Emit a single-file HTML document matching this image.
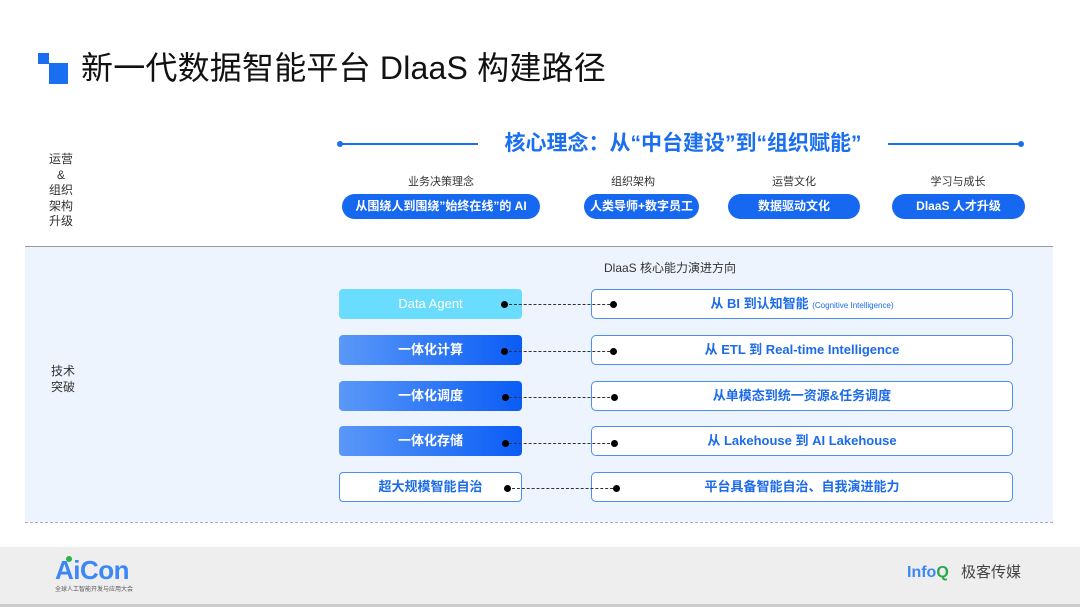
<!DOCTYPE html><html><head><meta charset="utf-8"><style>
*{margin:0;padding:0;box-sizing:border-box}
body{width:1080px;height:607px;position:relative;background:#fff;font-family:"Liberation Sans","Noto Sans CJK SC",sans-serif;overflow:hidden}
.a{position:absolute}
.c{text-align:center}
.pill{position:absolute;height:25px;border-radius:13px;background:#1768f0;color:#fff;font-size:12px;font-weight:bold;line-height:25px;text-align:center}
.lab{position:absolute;font-size:11px;color:#333;text-align:center;width:140px}
.lb{position:absolute;left:339px;width:183px;height:30px;border-radius:4px;color:#fff;font-size:13px;font-weight:bold;line-height:30px;text-align:center;background:linear-gradient(90deg,#5a98f8,#0a5cf5)}
.rb{position:absolute;left:591px;width:422px;height:30px;border-radius:5px;border:1.5px solid #4d8ef5;background:#fff;color:#1d6be8;font-size:13px;font-weight:bold;line-height:27px;text-align:center}
.dot{position:absolute;width:7px;height:7px;border-radius:50%;background:#000}
.dash{position:absolute;left:509px;width:106px;border-top:1.5px dashed #333}
</style></head><body>
<div class="a" style="left:38px;top:53px;width:11px;height:11px;background:#1a6ff0"></div>
<div class="a" style="left:49px;top:63px;width:19px;height:21px;background:#1a6ff0"></div>
<div class="a" style="left:81px;top:48px;font-size:32px;color:#111;line-height:40px;letter-spacing:0.2px">新一代数据智能平台 DlaaS 构建路径</div>

<div class="a" style="left:340px;top:143px;width:138px;height:2px;background:#1a6ff0"></div>
<div class="a" style="left:337px;top:141px;width:6px;height:6px;border-radius:50%;background:#1a6ff0"></div>
<div class="a" style="left:888px;top:143px;width:134px;height:2px;background:#1a6ff0"></div>
<div class="a" style="left:1018px;top:141px;width:6px;height:6px;border-radius:50%;background:#1a6ff0"></div>
<div class="a c" style="left:478px;top:130px;width:410px;font-size:21px;font-weight:bold;color:#1a6ff0;line-height:28px">核心理念：从“中台建设”到“组织赋能”</div>

<div class="a c" style="left:30px;top:152px;width:62px;font-size:12px;color:#333;line-height:15.5px">运营<br>&amp;<br>组织<br>架构<br>升级</div>

<div class="lab" style="left:371px;top:173px">业务决策理念</div>
<div class="lab" style="left:563px;top:173px">组织架构</div>
<div class="lab" style="left:724px;top:173px">运营文化</div>
<div class="lab" style="left:888px;top:173px">学习与成长</div>
<div class="pill" style="left:342px;top:194px;width:198px">从围绕人到围绕”始终在线”的 AI</div>
<div class="pill" style="left:584px;top:194px;width:115px">人类导师+数字员工</div>
<div class="pill" style="left:728px;top:194px;width:132px">数据驱动文化</div>
<div class="pill" style="left:892px;top:194px;width:133px">DlaaS 人才升级</div>

<div class="a" style="left:25px;top:246px;width:1028px;height:1.5px;background:#999"></div>
<div class="a" style="left:25px;top:247px;width:1028px;height:275px;background:#eef4fd"></div>
<div class="a" style="left:25px;top:522px;width:1028px;border-top:1.5px dashed #a9adb8"></div>

<div class="a c" style="left:30px;top:363px;width:66px;font-size:12px;color:#333;line-height:16px">技术<br>突破</div>
<div class="a c" style="left:560px;top:259px;width:220px;font-size:12px;color:#333">DlaaS 核心能力演进方向</div>

<div class="lb" style="top:289px;background:#6adcfd;font-weight:normal">Data Agent</div>
<div class="lb" style="top:335px">一体化计算</div>
<div class="lb" style="top:381px">一体化调度</div>
<div class="lb" style="top:426px">一体化存储</div>
<div class="lb" style="top:472px;background:#fff;border:1.5px solid #4d8ef5;color:#1d6be8;line-height:27px">超大规模智能自治</div>

<div class="rb" style="top:289px">从 BI 到认知智能 <span style="font-size:8px;font-weight:normal">(Cognitive Intelligence)</span></div>
<div class="rb" style="top:335px">从 ETL 到 Real-time Intelligence</div>
<div class="rb" style="top:381px">从单模态到统一资源&amp;任务调度</div>
<div class="rb" style="top:426px">从 Lakehouse 到 AI Lakehouse</div>
<div class="rb" style="top:472px">平台具备智能自治、自我演进能力</div>

<div class="dash" style="top:304px"></div><div class="dot" style="left:501px;top:301px"></div><div class="dot" style="left:610px;top:301px"></div>
<div class="dash" style="top:351px"></div><div class="dot" style="left:501px;top:348px"></div><div class="dot" style="left:610px;top:348px"></div>
<div class="dash" style="top:397px"></div><div class="dot" style="left:502px;top:394px"></div><div class="dot" style="left:611px;top:394px"></div>
<div class="dash" style="top:443px"></div><div class="dot" style="left:502px;top:440px"></div><div class="dot" style="left:611px;top:440px"></div>
<div class="dash" style="top:488px;left:512px"></div><div class="dot" style="left:504px;top:485px"></div><div class="dot" style="left:613px;top:485px"></div>

<div class="a" style="left:0;top:547px;width:1080px;height:60px;background:#eeeeee"></div>
<div class="a" style="left:0;top:604px;width:1080px;height:3px;background:#ccc"></div>
<div class="a" style="left:55px;top:555px;font-size:26px;font-weight:bold;color:#3d86f5;line-height:30px;letter-spacing:-0.5px">AiCon</div>
<div class="a" style="left:66px;top:556px;width:6px;height:6px;border-radius:50%;background:#29b34a"></div>
<div class="a" style="left:55px;top:584px;font-size:6px;color:#555">全球人工智能开发与应用大会</div>
<div class="a" style="left:907px;top:563px;font-size:16px;font-weight:bold;color:#3d86f5;line-height:20px">Info<span style="color:#29a84a">Q</span></div>
<div class="a" style="left:961px;top:563px;font-size:15px;color:#444;line-height:20px">极客传媒</div>
</body></html>
